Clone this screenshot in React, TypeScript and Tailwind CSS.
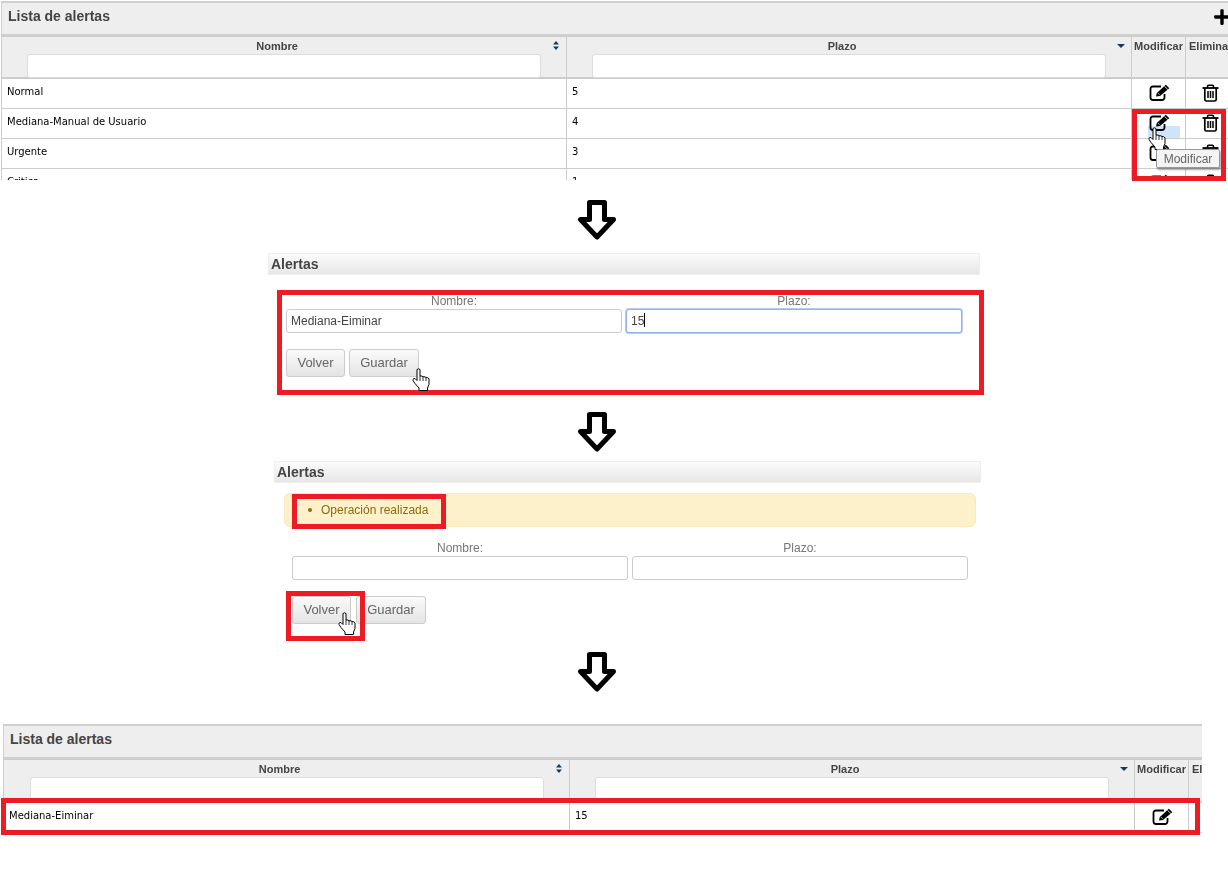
import React from "react";
import { FaPlus } from "react-icons/fa";

type Row = { name: string; plazo: string; trash?: boolean };

const RED_BOX = "absolute border-[5px] border-[#ed1c24] pointer-events-none";

function SortIcon({ active }: { active?: boolean }) {
  return (
    <svg width="8" height="9" viewBox="0 0 8 9" className="absolute right-[6px] top-[4px] text-[#123a66]">
      {!active && <path d="M4 0 7 3.5H1z" fill="currentColor" />}
      <path d={active ? "M0 3h8L4 7z" : "M1 5.5h6L4 9z"} fill="currentColor" />
    </svg>
  );
}

function DownArrow({ className }: { className: string }) {
  return (
    <svg width="40" height="40" viewBox="0 0 40 40" className={className}>
      <path d="M12.5 2.5h15v17h9L20 37 3.5 19.5h9z" fill="#fff" stroke="#000" strokeWidth="5" strokeLinejoin="round" />
    </svg>
  );
}

function HandCursor({ className }: { className: string }) {
  return (
    <svg width="18" height="23" viewBox="0 0 18 23" className={className}>
      <path
        d="M5 1.5 6.5.8 8 1.5V8h2l1 .8h2l1 .8h1.5l1.5 1.2v5.7l-1.5 3.5v2.5H7V20l-4-4.5-2-3v-1.2l1-.8h1l2 2z"
        fill="#fff"
        stroke="#000"
        strokeWidth="1"
        strokeLinejoin="round"
      />
      <path d="M8 8v5M11 8.8V13M14 9.6V13" fill="none" stroke="#000" strokeWidth="0.8" />
    </svg>
  );
}

function EditIcon() {
  return (
    <svg width="22" height="17" viewBox="0 0 22 17">
      <path
        d="M12 2.5H4A2.5 2.5 0 0 0 1.5 5v8.5A2.5 2.5 0 0 0 4 16h9a2.5 2.5 0 0 0 2.5-2.5V10"
        fill="none"
        stroke="#000"
        strokeWidth="1.8"
      />
      <path d="M7 12.5 7.8 9 16.8.8 20.3 4.2 11 12z" fill="#000" />
      <path d="M15.4 2.2 18.9 5.6" stroke="#fff" strokeWidth="0.8" />
      <path d="M8.8 9 10.6 10.8" stroke="#fff" strokeWidth="0.7" />
    </svg>
  );
}

function TrashIcon() {
  return (
    <svg width="17" height="18" viewBox="0 0 17 18" fill="none" stroke="#000">
      <path d="M.5 4h16" strokeWidth="1.8" />
      <path d="M5.5 4V2.5a1.2 1.2 0 0 1 1.2-1.2h3.6a1.2 1.2 0 0 1 1.2 1.2V4" strokeWidth="1.6" />
      <path d="M2.8 4v11.5A1.6 1.6 0 0 0 4.4 17h8.2a1.6 1.6 0 0 0 1.6-1.5V4" strokeWidth="1.7" />
      <path d="M6 7v7M8.5 7v7M11 7v7" strokeWidth="1.5" />
    </svg>
  );
}

function ListPanel({ rows, showPlus, gridClass, headClass }: { rows: Row[]; showPlus?: boolean; gridClass: string; headClass: string }) {
  const headCell = `relative border-r border-[#ccc] pt-[3px] text-center text-[11px] leading-[13px] font-bold text-[#444] ${headClass}`;
  return (
    <div className="font-['Liberation_Sans',sans-serif]">
      {/* Title bar */}
      <div className="relative h-[35px] border-x border-t-2 border-b-2 border-[#d0d0d0] border-r-0 bg-[#eeeeee] pt-[6px] pl-[6px]">
        <div className="text-[14px] leading-[14px] font-bold text-[#444]">Lista de alertas</div>
        {showPlus && <FaPlus className="absolute top-[5px] right-[-3px] text-[18px] text-black" />}
      </div>

      {/* Header */}
      <div className={`grid border-t border-l border-b-2 border-[#ccc] bg-[#eeeeee] ${gridClass}`}>
        <div className={headCell}>
          <div className="pr-[14px]">Nombre</div>
          <SortIcon />
          <div className="mx-auto mt-[1px] h-[24px] w-[514px] rounded-[3px] border border-[#ddd] bg-white" />
        </div>
        <div className={headCell}>
          <div className="pr-[14px]">Plazo</div>
          <SortIcon active />
          <div className="mx-auto mt-[1px] h-[24px] w-[514px] rounded-[3px] border border-[#ddd] bg-white" />
        </div>
        <div className={headCell}>Modificar</div>
        <div className={`${headCell} overflow-hidden border-r-0 pl-[3px] text-left whitespace-nowrap`}>Eliminar</div>
      </div>

      {/* Rows */}
      {rows.map((row) => (
        <div key={row.name} className={`grid h-[30px] border-b border-l border-[#ccc] font-['DejaVu_Sans',sans-serif] text-[10px] text-black ${gridClass}`}>
          <div className="border-r border-[#ccc] pt-[5px] pl-[5px]">{row.name}</div>
          <div className="border-r border-[#ccc] pt-[5px] pl-[5px]">{row.plazo}</div>
          <div className="flex justify-center border-r border-[#ccc] pt-[5px] pl-[3px]">
            <EditIcon />
          </div>
          <div className="flex justify-center pt-[5px] pr-[1px]">{row.trash && <TrashIcon />}</div>
        </div>
      ))}
    </div>
  );
}

function AlertForm({ nameValue, plazoValue, focused }: { nameValue: string; plazoValue: string; focused?: boolean }) {
  const field = "h-[24px] w-[336px] rounded-[3px] border bg-white pl-[4px] text-[12px] leading-[22px] text-[#444]";
  return (
    <div>
      <div className="flex gap-[4px] text-[12px] leading-[14px] text-[#777]">
        <div className="w-[336px] text-center">Nombre:</div>
        <div className="w-[336px] text-center">Plazo:</div>
      </div>
      <div className="mt-[1px] flex gap-[4px]">
        <div className={`${field} border-[#ccc]`}>{nameValue}</div>
        <div className={`${field} ${focused ? "border-[#8fb4f0] shadow-[0_0_0_1px_#b4ccf5]" : "border-[#ccc]"}`}>
          {plazoValue}
          {focused && <span className="inline-block h-[14px] w-px translate-y-[2px] bg-black" />}
        </div>
      </div>
    </div>
  );
}

function Buttons({ gapClass }: { gapClass: string }) {
  const btn = "flex h-[28px] items-center justify-center rounded-[3px] border border-[#ccc] bg-gradient-to-b from-[#fafafa] to-[#e4e4e4] text-[13px] text-[#666]";
  return (
    <div className={`flex ${gapClass}`}>
      <div className={`${btn} w-[59px]`}>Volver</div>
      <div className={`${btn} w-[70px]`}>Guardar</div>
    </div>
  );
}

function SectionTitle() {
  return (
    <div className="flex h-[22px] items-center border border-[#eee] bg-gradient-to-b from-[#fbfbfb] to-[#e8e6e6] pl-[2px] text-[14px] font-bold text-[#444]">
      Alertas
    </div>
  );
}

export default function App() {
  return (
    <div className="relative h-[879px] w-[1228px] overflow-hidden bg-white font-['Liberation_Sans',sans-serif]">
      {/* Step 1: list */}
      <div className="relative h-[180px] overflow-hidden pt-[1px] pl-[1px]">
        <ListPanel
          showPlus
          gridClass="grid-cols-[565px_565px_54px_50px]"
          headClass="h-[40px]"
          rows={[
            { name: "Normal", plazo: "5", trash: true },
            { name: "Mediana-Manual de Usuario", plazo: "4", trash: true },
            { name: "Urgente", plazo: "3", trash: true },
            { name: "Critica", plazo: "1", trash: true },
          ]}
        />
      </div>
      <div className="absolute top-[126px] left-[1148px] h-[12px] w-[32px] bg-[#cfe4fb] mix-blend-multiply" />
      <HandCursor className="absolute top-[127px] left-[1148px]" />
      <div className="absolute top-[149px] left-[1156px] flex h-[19px] w-[64px] items-center justify-center rounded-[2px] border border-[#999] bg-[#f4f4f4] text-[12px] text-[#666] shadow-[1px_2px_2px_rgba(0,0,0,0.35)]">
        Modificar
      </div>
      <div className={`${RED_BOX} top-[109px] left-[1132px] h-[72px] w-[94px]`} />

      <DownArrow className="mt-[20px] ml-[577px]" />

      {/* Step 2: edit form */}
      <div className="relative mt-[13px] ml-[268px] w-[712px]">
        <SectionTitle />
        <div className={`${RED_BOX} top-[37px] left-[9px] h-[105px] w-[707px]`} />
        <div className="mt-[19px] ml-[18px]">
          <AlertForm nameValue="Mediana-Eiminar" plazoValue="15" focused />
        </div>
        <div className="mt-[16px] ml-[18px]">
          <Buttons gapClass="gap-[4px]" />
        </div>
        <HandCursor className="absolute top-[115px] left-[144px]" />
      </div>

      <DownArrow className="mt-[35px] ml-[577px]" />

      {/* Step 3: saved */}
      <div className="relative mt-[9px] ml-[274px] w-[707px]">
        <SectionTitle />
        <div className="mt-[10px] ml-[10px] flex h-[34px] w-[692px] items-center rounded-[6px] border border-[#fbe9b7] bg-[#fdf1cc] pl-[23px] text-[12px] text-[#8a6d0b]">
          <span className="mr-[9px] h-[4px] w-[4px] rounded-full bg-[#8a6d0b]" />
          Operación realizada
        </div>
        <div className={`${RED_BOX} top-[33px] left-[18px] h-[35px] w-[154px]`} />
        <div className="mt-[14px] ml-[18px]">
          <AlertForm nameValue="" plazoValue="" />
        </div>
        <div className="mt-[16px] ml-[18px]">
          <Buttons gapClass="gap-[5px]" />
        </div>
        <div className={`${RED_BOX} top-[130px] left-[12px] h-[50px] w-[79px]`} />
        <HandCursor className="absolute top-[151px] left-[64px]" />
      </div>

      <DownArrow className="mt-[28px] ml-[577px]" />

      {/* Step 4: result */}
      <div className="relative mt-[32px] ml-[3px] h-[109px] w-[1199px] overflow-hidden">
        <ListPanel
          gridClass="grid-cols-[566px_565px_54px_54px]"
          headClass="h-[41px]"
          rows={[{ name: "Mediana-Eiminar", plazo: "15" }]}
        />
      </div>
      <div className={`${RED_BOX} top-[798px] left-[1px] h-[37px] w-[1199px]`} />
    </div>
  );
}
